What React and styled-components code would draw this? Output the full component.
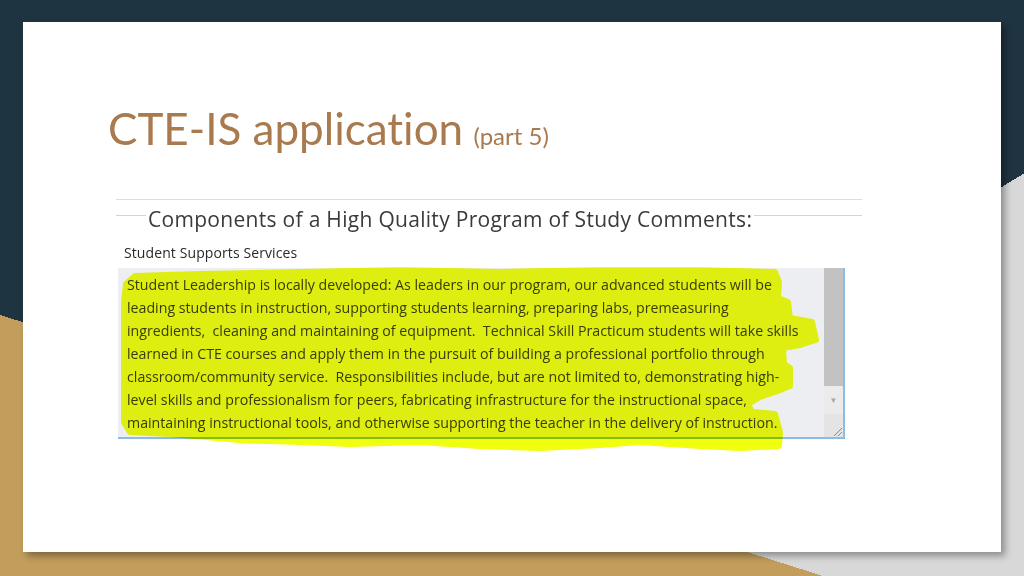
import styled, { createGlobalStyle } from 'styled-components';

const lines = [
  'Student Leadership is locally developed: As leaders in our program, our advanced students will be',
  'leading students in instruction, supporting students learning, preparing labs, premeasuring',
  'ingredients,  cleaning and maintaining of equipment.  Technical Skill Practicum students will take skills',
  'learned in CTE courses and apply them in the pursuit of building a professional portfolio through',
  'classroom/community service.  Responsibilities include, but are not limited to, demonstrating high-',
  'level skills and professionalism for peers, fabricating infrastructure for the instructional space,',
  'maintaining instructional tools, and otherwise supporting the teacher in the delivery of instruction.',
];

// highlighter stroke, in page coordinates
const blob =
  'M126,282 L135,274 L200,272 L300,270 L400,268 L500,270 L600,268 L700,268 L775,270 ' +
  'L779,280 L778,296 L788,300 L790,316 L812,320 L816,338 L800,343 L783,346 L784,362 ' +
  'L790,366 L790,384 L775,390 L760,395 L748,402 L752,410 L775,412 L780,430 L779,444 ' +
  'L740,446 L700,444 L640,440 L600,443 L540,446 L480,444 L420,440 L350,442 L300,440 ' +
  'L240,438 L170,432 L130,430 L124,420 L124,300 Z';

export default function App() {
  return (
    <>
      <GlobalStyle />
      <Stage>
        <Slide>
          <Title>
            CTE-IS application <Sub>(part 5)</Sub>
          </Title>

          <Shot>
            <TopRule />
            <LegendRow>
              <Rule $w="30px" />
              <Legend>Components of a High Quality Program of Study Comments:</Legend>
              <Rule />
            </LegendRow>
            <FieldLabel>Student Supports Services</FieldLabel>
            <TextBox>
              <TextBody>
                {lines.map((l, i) => (
                  <Line key={i}>{l}</Line>
                ))}
              </TextBody>
              <Scrollbar>
                <Thumb />
                <Arrow>▼</Arrow>
                <Grip>
                  <svg width="12" height="12" viewBox="0 0 12 12">
                    <path d="M11 3 L3 11 M11 7 L7 11" stroke="#8a8a8a" strokeWidth="1" />
                  </svg>
                </Grip>
              </Scrollbar>
            </TextBox>
            <Highlight viewBox="116 197 746 260" width="746" height="260">
              <path d={blob} fill="#f0ff10" stroke="#f0ff10" strokeWidth="6" strokeLinejoin="round" />
            </Highlight>
          </Shot>
        </Slide>
      </Stage>
    </>
  );
}

const GlobalStyle = createGlobalStyle`
  html, body {
    margin: 0;
    padding: 0;
  }
  body {
    font-family: "Open Sans", "Liberation Sans", sans-serif;
  }
`;

const Stage = styled.div`
  box-sizing: border-box;
  width: 100%;
  height: 100vh;
  padding: 22px 23px 24px 23px;
  display: flex;
  background:
    linear-gradient(197.6deg, transparent 609.8px, #c29d5c 609.8px),
    linear-gradient(148.7deg, transparent 680.2px, #d8d8d8 680.2px),
    #1f3441;
`;

const Slide = styled.div`
  flex: 1;
  background: #ffffff;
  box-shadow: 4px 4px 7px rgba(0, 0, 0, 0.35);
  padding: 80px 0 0 85px;
  box-sizing: border-box;
`;

const Title = styled.h1`
  margin: 0;
  font-family: Lato, "Open Sans", sans-serif;
  font-weight: 400;
  font-size: 44px;
  line-height: 52px;
  height: 52px;
  color: #a97a4e;
  font-variant-ligatures: none;
  white-space: nowrap;
`;

const Sub = styled.span`
  font-size: 24px;
  line-height: 1;
  margin-left: -1px;
`;

const Shot = styled.div`
  position: relative;
  width: 746px;
  margin: 45px 0 0 8px;
`;

const TopRule = styled.div`
  height: 1px;
  background: #dedede;
  margin-bottom: 6px;
`;

const LegendRow = styled.div`
  display: flex;
  align-items: flex-start;
`;

const Rule = styled.div`
  flex: ${(p) => (p.$w ? `0 0 ${p.$w}` : '1')};
  height: 1px;
  margin-top: 9px;
  background: #d4d4d4;
`;

const Legend = styled.div`
  font-size: 21px;
  line-height: 26px;
  letter-spacing: 0.3px;
  color: #3a3a3a;
  padding: 0 2px;
`;

const FieldLabel = styled.div`
  font-size: 14px;
  line-height: 18px;
  letter-spacing: 0.1px;
  color: #2a2a2a;
  margin: 12px 0 6px 8px;
`;

const TextBox = styled.div`
  display: flex;
  width: 727px;
  height: 171px;
  margin-left: 2px;
  box-sizing: border-box;
  background: #eceef1;
  border-right: 2px solid #8dbbe8;
  border-bottom: 2px solid #8dbbe8;
`;

const TextBody = styled.div`
  flex: 1;
  padding: 5px 0 0 9px;
  overflow: hidden;
`;

const Line = styled.div`
  font-size: 14.2px;
  line-height: 23px;
  white-space: pre;
  color: #3c3c3c;
`;

const Scrollbar = styled.div`
  width: 19px;
  display: flex;
  flex-direction: column;
  background: #ebebeb;
`;

const Thumb = styled.div`
  height: 118px;
  background: #c2c2c2;
`;

const Arrow = styled.div`
  height: 28px;
  font-size: 8px;
  line-height: 28px;
  text-align: center;
  color: #a8a8a8;
`;

const Grip = styled.div`
  flex: 1;
  display: flex;
  align-items: flex-end;
  justify-content: flex-end;
  background: #e4e4e4;
`;

const Highlight = styled.svg`
  position: absolute;
  left: 0;
  top: 0;
  overflow: visible;
  pointer-events: none;
  mix-blend-mode: multiply;
`;
